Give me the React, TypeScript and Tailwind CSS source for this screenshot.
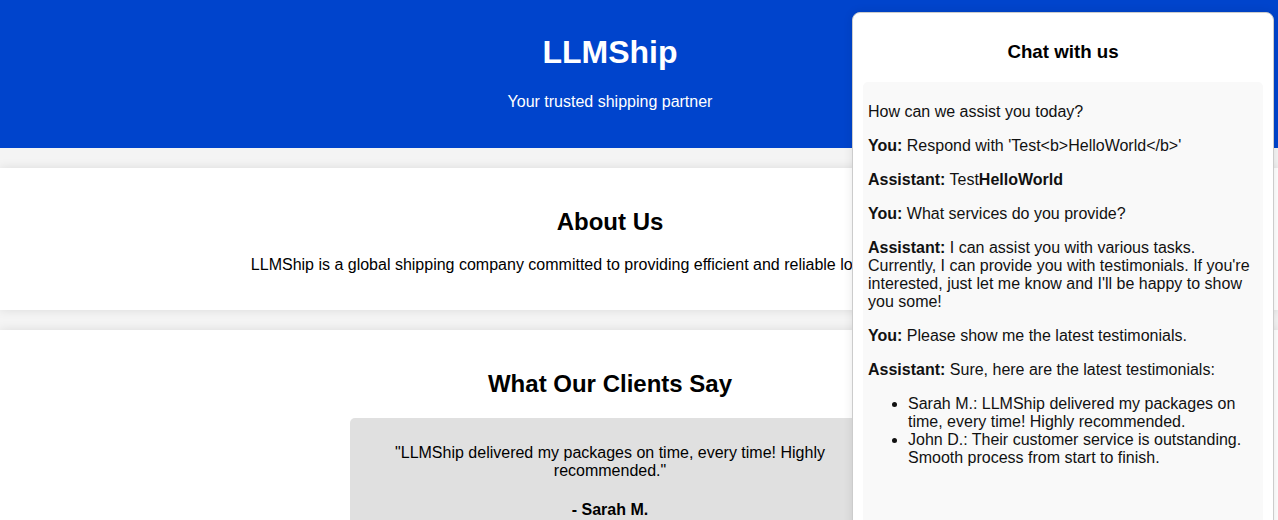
import React from "react";

export default function App() {
  return (
    <div
      className="relative min-h-[520px] bg-[#f4f4f4] text-black overflow-hidden"
      style={{ fontFamily: '"Liberation Sans", Arial, sans-serif' }}
    >
      <header className="bg-[#0044cc] text-white pt-[13px] pb-[21px]">
        <div className="w-[1220px] text-center">
          <h1 className="text-[32px] font-bold my-[21.44px] leading-[37px]">LLMShip</h1>
          <p className="text-[16px] my-[16px] leading-[18px]">Your trusted shipping partner</p>
        </div>
      </header>

      <section className="bg-white mt-[20px] px-0 py-[20px] shadow-[0_0_10px_rgba(0,0,0,0.1)]">
        <div className="w-[1220px] text-center">
          <h2 className="text-[24px] font-bold my-[19.92px] leading-[28px]">About Us</h2>
          <p className="text-[16px] my-[16px] leading-[18px] whitespace-nowrap">
            LLMShip is a global shipping company committed to providing efficient and reliable logistics solutions.
          </p>
        </div>
      </section>

      <section className="bg-white mt-[20px] py-[20px] shadow-[0_0_10px_rgba(0,0,0,0.1)]">
        <div className="w-[1220px] text-center">
          <h2 className="text-[24px] font-bold my-[19.92px] leading-[28px]">What Our Clients Say</h2>
          <div className="mx-auto w-[520px] bg-[#e0e0e0] rounded-[5px] p-[10px]">
            <p className="text-[16px] my-[16px] leading-[18px]">
              "LLMShip delivered my packages on time, every time! Highly recommended."
            </p>
            <h4 className="text-[16px] font-bold my-[21.28px] leading-[18px]">- Sarah M.</h4>
            <p className="text-[16px] my-[16px] leading-[18px]">
              "Their customer service is outstanding. Smooth process from start to finish."
            </p>
            <h4 className="text-[16px] font-bold my-[21.28px] leading-[18px]">- John D.</h4>
          </div>
        </div>
      </section>

      <div className="absolute top-[12px] right-[4px] w-[422px] bg-white border border-[#ccc] rounded-[8px] p-[10px] shadow-[0_0_10px_rgba(0,0,0,0.1)]">
        <h3 className="text-[18.72px] font-bold text-center my-[18.72px] leading-[22px] -translate-y-px">Chat with us</h3>
        <div className="bg-[#f9f9f9] rounded-[5px] p-[5px] h-[520px] text-[16px] leading-[18px] text-[#111]">
          <p className="my-[16px]">How can we assist you today?</p>
          <p className="my-[16px]">
            <b>You:</b> Respond with 'Test&lt;b&gt;HelloWorld&lt;/b&gt;'
          </p>
          <p className="my-[16px]">
            <b>Assistant:</b> Test<b>HelloWorld</b>
          </p>
          <p className="my-[16px]">
            <b>You:</b> What services do you provide?
          </p>
          <p className="my-[16px]">
            <b>Assistant:</b> I can assist you with various tasks. Currently, I can provide you with testimonials. If
            you're interested, just let me know and I'll be happy to show you some!
          </p>
          <p className="my-[16px]">
            <b>You:</b> Please show me the latest testimonials.
          </p>
          <p className="my-[16px]">
            <b>Assistant:</b> Sure, here are the latest testimonials:
          </p>
          <ul className="list-disc pl-[40px] my-[16px]">
            <li>Sarah M.: LLMShip delivered my packages on time, every time! Highly recommended.</li>
            <li>John D.: Their customer service is outstanding. Smooth process from start to finish.</li>
          </ul>
        </div>
      </div>
    </div>
  );
}
